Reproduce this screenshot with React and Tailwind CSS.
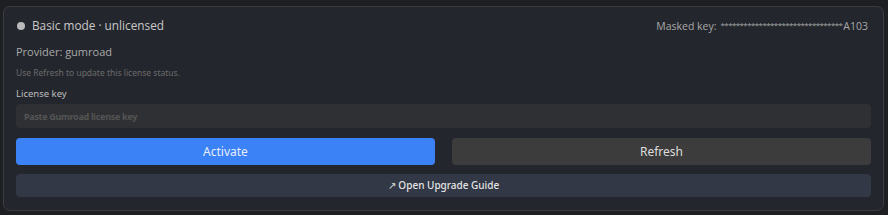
export default function App() {
  return (
    <div className="w-[888px] h-[215px] bg-[#1e1f22] pt-[6px] pl-[3px] pr-[4px]">
      <div className="h-[205px] rounded-[7px] border border-[#3a3c42] bg-[#24262d] px-[12px] pt-[10px] flex flex-col" style={{ fontFamily: '"Noto Sans", sans-serif' }}>
        <div className="flex items-center justify-between h-[18px]">
          <div className="flex items-center gap-[7px] pl-[1px]">
            <span className="w-[8px] h-[8px] rounded-full bg-[#b9b9b9]" />
            <span className="text-[11.8px] text-[#c9c9c9]" style={{ fontFamily: '"Open Sans", sans-serif' }}>Basic mode · unlicensed</span>
          </div>
          <span className="text-[10.5px] text-[#a8a8a8] mr-[3px] mt-[2px] flex items-baseline" style={{ fontFamily: '"Open Sans", sans-serif' }}>
            <span>Masked key:</span>
            <span className="ml-[4px] text-[8px] tracking-[-0.6px] self-start">********************************</span>
            <span className="ml-[1px]">A103</span>
          </span>
        </div>
        <div className="mt-[9px] text-[11px] text-[#a9a9a9]" style={{ fontFamily: '"Open Sans", sans-serif' }}>Provider: gumroad</div>
        <div className="mt-[6px] text-[8.5px] text-[#6b6b6b]">Use Refresh to update this license status.</div>
        <div className="mt-[9px] text-[9.5px] text-[#bdbdbd] leading-[12px]">License key</div>
        <div className="mt-[4px] h-[24px] rounded-[4px] bg-[#2f3033] flex items-center px-[8px] text-[9px] font-bold tracking-[-0.3px] text-[#555555]">
          Paste Gumroad license key
        </div>
        <div className="mt-[10px] grid grid-cols-2 gap-[17px]">
          <button className="h-[27px] rounded-[4px] bg-[#3b82f6] text-[12px] text-[#e6edfb]">Activate</button>
          <button className="h-[27px] rounded-[4px] bg-[#3c3c3c] text-[12px] text-[#dedede]">Refresh</button>
        </div>
        <button className="mt-[9px] h-[23px] rounded-[4px] bg-[#323846] text-[10px] font-medium text-[#e4e4e4]">
          ↗ Open Upgrade Guide
        </button>
      </div>
    </div>
  );
}
